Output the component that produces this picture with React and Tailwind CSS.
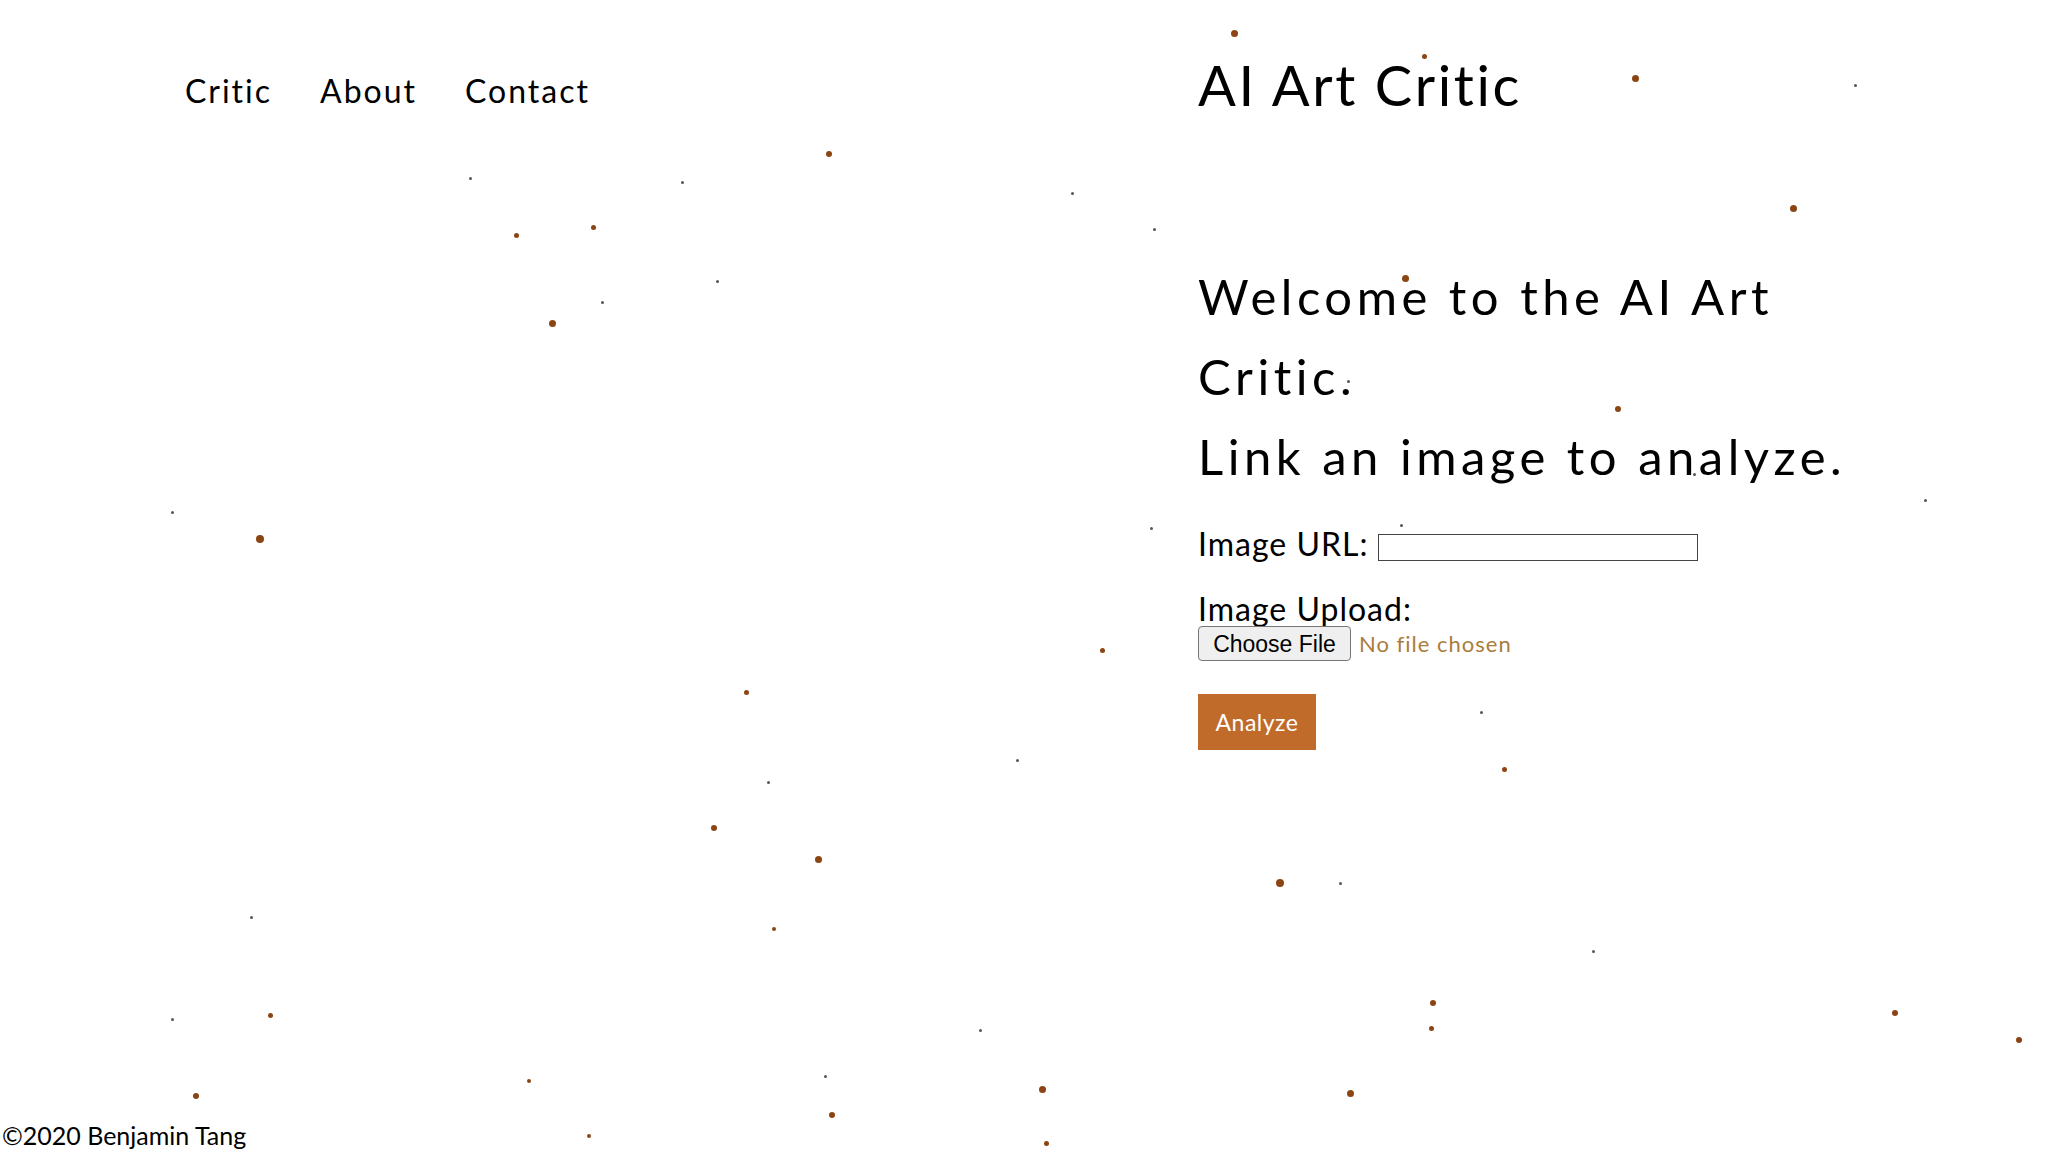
const BROWN = [
  [1234, 33, 7], [1424, 56, 5], [1635, 78, 7], [829, 154, 6], [1793, 208, 7],
  [516, 235, 5], [593, 227, 5], [552, 323, 7], [1405, 278, 7], [1618, 409, 6],
  [260, 539, 8], [1102, 650, 5], [746, 692, 5], [1504, 769, 5], [714, 828, 6],
  [818, 859, 7], [1280, 883, 8], [774, 929, 4], [270, 1015, 5], [1433, 1003, 6],
  [1431, 1028, 5], [1895, 1013, 6], [2019, 1040, 6], [1042, 1089, 7], [1350, 1093, 7],
  [196, 1096, 6], [529, 1081, 4], [832, 1115, 6], [589, 1136, 4], [1046, 1143, 5],
]

const GREY = [
  [470, 178], [682, 182], [1072, 193], [602, 302], [172, 512], [1151, 528],
  [1925, 500], [1481, 712], [1017, 760], [1340, 883], [1593, 951], [251, 917],
  [172, 1019], [980, 1030], [1401, 525], [1348, 381], [1855, 85], [1154, 229],
  [717, 281], [825, 1076], [1694, 474], [768, 782],
]

function Particles() {
  return (
    <div className="absolute inset-0 pointer-events-none">
      {BROWN.map(([x, y, d], i) => (
        <span
          key={'b' + i}
          className="absolute rounded-full bg-[#8b4513]"
          style={{ left: x - d / 2, top: y - d / 2, width: d, height: d }}
        />
      ))}
      {GREY.map(([x, y], i) => (
        <span
          key={'g' + i}
          className="absolute w-[3px] h-[3px] rounded-full bg-[#555]"
          style={{ left: x - 1, top: y - 1 }}
        />
      ))}
    </div>
  )
}

export default function App() {
  return (
    <div className="relative w-full h-[1152px] overflow-hidden bg-white text-black font-['Lato','Noto_Sans',sans-serif]">
      <Particles />
      <div className="relative flex flex-col h-full">
        <div className="flex flex-1">
          <nav className="w-[1198px] pl-[185px] pt-[67px] flex gap-[48px] text-[32px] leading-[48px] tracking-[2px]">
            <a>Critic</a>
            <a>About</a>
            <a>Contact</a>
          </nav>
          <main className="flex-1 pt-[49px]">
            <h1 className="text-[56px] leading-[72px] tracking-[2.6px]">AI Art Critic</h1>
            <h2 className="mt-[135px] text-[49px] leading-[80px] tracking-[4.5px]">
              Welcome to the AI Art
              <br />
              Critic.
              <br />
              Link an image to analyze.
            </h2>
            <div className="mt-[28px] flex items-center gap-[10px] text-[32px] leading-[40px] tracking-[1px]">
              <label>Image URL:</label>
              <input type="text" className="mt-[7px] w-[320px] h-[27px] border border-[#444] bg-white" />
            </div>
            <div className="mt-[28px] text-[32px] leading-[34px] tracking-[1px]">Image Upload:</div>
            <div className="flex items-center gap-[8px]">
              <button className="w-[153px] h-[35px] rounded-[4px] border border-[#767676] bg-[#efefef] font-['Liberation_Sans',Arial,sans-serif] text-[23px] text-black">
                Choose File
              </button>
              <span className="text-[22px] tracking-[1px] text-[#a97c3c]">No file chosen</span>
            </div>
            <button className="mt-[33px] w-[118px] h-[56px] bg-[#c16b2b] text-white text-[23px] tracking-[0.5px]">
              Analyze
            </button>
          </main>
        </div>
        <footer className="pl-[2px] pb-[2px] text-[25px] leading-[30px]">©2020 Benjamin Tang</footer>
      </div>
    </div>
  )
}
